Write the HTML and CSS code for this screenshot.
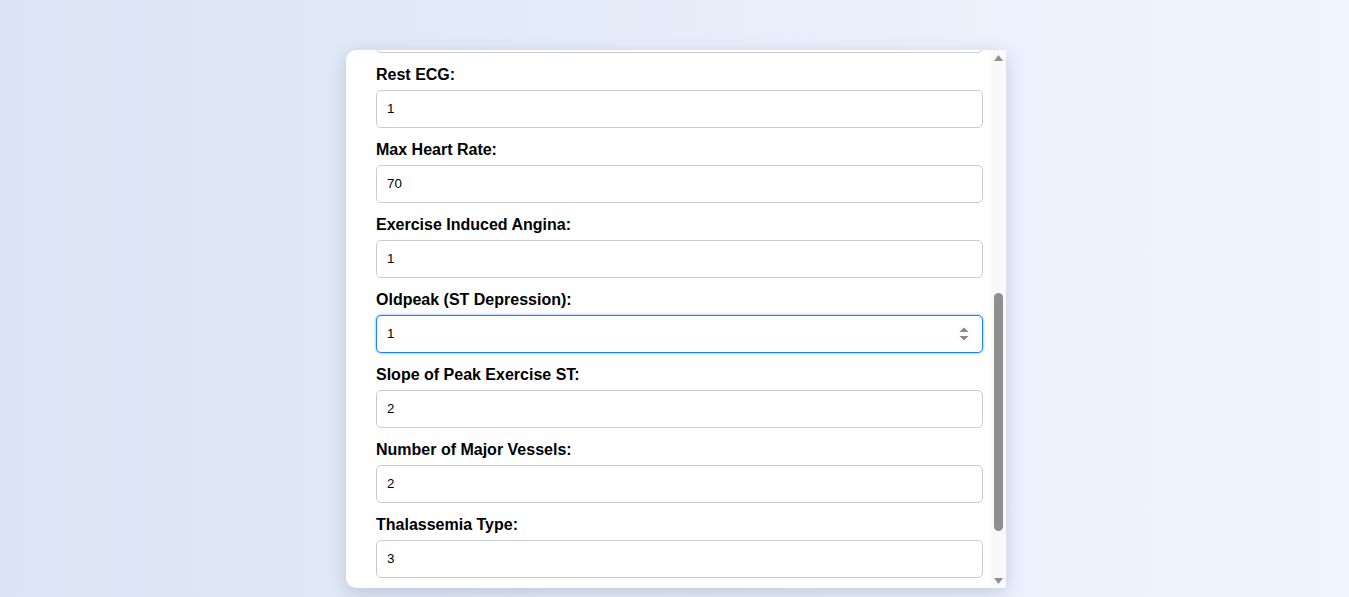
FILE: index.html
```html
<!DOCTYPE html>
<html lang="en">
<head>
<meta charset="utf-8">
<title>Heart Disease Prediction</title>
<link rel="stylesheet" href="styles.css">
</head>
<body>
<main class="page">
  <div class="card">
    <form class="scroller" id="scroller">
      <h2 class="title">Heart Disease Prediction</h2>
      <div class="field"><label class="label">Age:</label><input class="input" type="number" value="45"></div>
      <div class="field"><label class="label">Sex:</label><input class="input" type="number" value="1"></div>
      <div class="field"><label class="label">Chest Pain Type:</label><input class="input" type="number" value="2"></div>
      <div class="field"><label class="label">Resting Blood Pressure:</label><input class="input" type="number" value="120"></div>
      <div class="field"><label class="label">Cholesterol:</label><input class="input" type="number" value="200"></div>
      <div class="field"><label class="label">Fasting Blood Sugar:</label><input class="input" type="number" value="0"></div>
      <div class="field"><label class="label" id="restecg-label">Rest ECG:</label><input class="input" type="number" value="1"></div>
      <div class="field"><label class="label">Max Heart Rate:</label><input class="input" type="number" value="70"></div>
      <div class="field"><label class="label">Exercise Induced Angina:</label><input class="input" type="number" value="1"></div>
      <div class="field"><label class="label">Oldpeak (ST Depression):</label><input class="input" id="oldpeak" type="number" step="0.1" value="1"></div>
      <div class="field"><label class="label">Slope of Peak Exercise ST:</label><input class="input" type="number" value="2"></div>
      <div class="field"><label class="label">Number of Major Vessels:</label><input class="input" type="number" value="2"></div>
      <div class="field"><label class="label">Thalassemia Type:</label><input class="input" type="number" value="3"></div>
      <button class="submit" type="button">Predict</button>
    </form>
    <div class="scrollbar" aria-hidden="true">
      <div class="sb-button">
        <svg width="9" height="6" viewBox="0 0 9 6"><polygon points="4.5,0 9,6 0,6" fill="#909090"/></svg>
      </div>
      <div class="sb-track" id="track">
        <div class="sb-thumb" id="thumb"></div>
      </div>
      <div class="sb-button">
        <svg width="9" height="6" viewBox="0 0 9 6"><polygon points="0,0 9,0 4.5,6" fill="#909090"/></svg>
      </div>
    </div>
  </div>
</main>
<script src="script.js"></script>
</body>
</html>
```

FILE: styles.css
```css
html, body {
  margin: 0;
  height: 100%;
}
body {
  background: linear-gradient(90deg, #dae4f4 0%, #e6edf9 50%, #f0f6ff 100%);
  font-family: "Liberation Sans", Arial, sans-serif;
  overflow: hidden;
}
.page {
  display: flex;
  justify-content: center;
  align-items: flex-start;
  padding-top: 50px;
  padding-left: 3px;
}
.card {
  display: flex;
  width: 660px;
  max-height: 538px;
  background: #fff;
  border-radius: 10px 0 0 10px;
  box-shadow: 0 5px 18px rgba(40, 60, 100, 0.2);
}
.scroller {
  position: relative;
  flex: 1;
  min-width: 0;
  min-height: 0;
  overflow-y: auto;
  scrollbar-width: none;
  padding: 30px;
  border-radius: 10px 0 0 10px;
}
.scroller::-webkit-scrollbar {
  display: none;
}
.scrollbar {
  width: 15px;
  flex: 0 0 15px;
  display: flex;
  flex-direction: column;
  background: #f9f9f9;
}
.sb-button {
  height: 15px;
  flex: 0 0 15px;
  display: flex;
  align-items: center;
  justify-content: center;
}
.sb-track {
  flex: 1;
  position: relative;
}
.sb-thumb {
  position: absolute;
  left: 3px;
  right: 3px;
  top: 228px;
  height: 237px;
  background: #8f8f8f;
  border-radius: 5px;
}
.title {
  margin: 0 0 30px;
  font-size: 24px;
  line-height: 28px;
  text-align: center;
  color: #222;
}
.field {
  margin-bottom: 13px;
}
.label {
  display: block;
  font-size: 16px;
  line-height: 18px;
  font-weight: bold;
  color: #000;
  margin-bottom: 6px;
}
.input {
  display: block;
  box-sizing: content-box;
  width: 100%;
  padding: 10px;
  height: 16px;
  line-height: 16px;
  font-family: "Liberation Sans", Arial, sans-serif;
  font-size: 13.33px;
  color: #000;
  background: #fff;
  border: 1px solid #ccc;
  border-radius: 5px;
  margin: 0;
}
.input:focus {
  outline: none;
  border-color: #1a82ff;
  box-shadow: 0 0 3px rgba(0, 123, 255, 0.6);
}
.submit {
  display: block;
  width: 100%;
  margin-top: 18px;
  height: 50px;
  border: none;
  border-radius: 5px;
  background: #007bff;
  color: #fff;
  font-family: "Liberation Sans", Arial, sans-serif;
  font-size: 16px;
  font-weight: bold;
}
```

FILE: script.js
```js
(function () {
  var scroller = document.getElementById('scroller');
  var oldpeak = document.getElementById('oldpeak');
  var label = document.getElementById('restecg-label');
  var track = document.getElementById('track');
  var thumb = document.getElementById('thumb');
  oldpeak.focus({ preventScroll: true });
  scroller.scrollTop = label.offsetTop - 16;
  var trackH = track.clientHeight;
  var ratio = scroller.clientHeight / scroller.scrollHeight;
  var thumbH = Math.round(trackH * ratio);
  var maxScroll = scroller.scrollHeight - scroller.clientHeight;
  var top = maxScroll > 0 ? Math.round((trackH - thumbH) * scroller.scrollTop / maxScroll) : 0;
  thumb.style.height = thumbH + 'px';
  thumb.style.top = (top - 3) + 'px';
})();
```
